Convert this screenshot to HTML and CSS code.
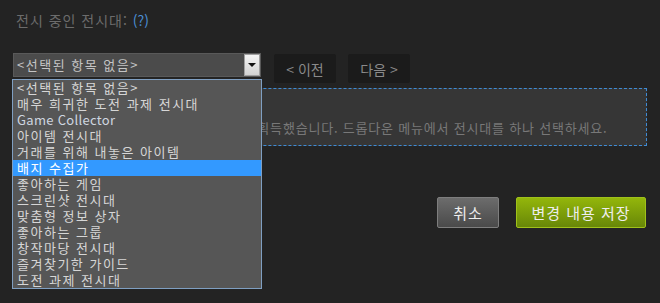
FILE: index.html
```html
<!DOCTYPE html>
<html lang="ko">
<head>
    <meta charset="UTF-8">
    <meta name="viewport" content="width=device-width, initial-scale=1.0">
    <title>전시대 편집</title>
    <link rel="stylesheet" href="styles.css">
</head>
<body>

    <div class="showcase-edit">
        <div class="title">전시 중인 전시대: <a class="help" href="#">(?)</a></div>

        <div class="select-row">
            <div class="select">
                <span class="select-value">&lt;선택된 항목 없음&gt;</span>
                <span class="select-arrow"></span>

                <!-- open dropdown list -->
                <ul class="select-list">
                    <li>&lt;선택된 항목 없음&gt;</li>
                    <li>매우 희귀한 도전 과제 전시대</li>
                    <li class="latin">Game Collector</li>
                    <li>아이템 전시대</li>
                    <li>거래를 위해 내놓은 아이템</li>
                    <li class="active">배지 수집가</li>
                    <li>좋아하는 게임</li>
                    <li>스크린샷 전시대</li>
                    <li>맞춤형 정보 상자</li>
                    <li>좋아하는 그룹</li>
                    <li>창작마당 전시대</li>
                    <li>즐겨찾기한 가이드</li>
                    <li>도전 과제 전시대</li>
                </ul>
            </div>
            <button class="nav-btn">&lt; 이전</button>
            <button class="nav-btn">다음 &gt;</button>
        </div>

        <div class="preview">
            축하합니다! 레벨을 올려서 새 전시대를 획득했습니다. 드롭다운 메뉴에서 전시대를 하나 선택하세요.
        </div>

        <div class="actions">
            <button class="btn-cancel">취소</button>
            <button class="btn-save">변경 내용 저장</button>
        </div>
    </div>

</body>
</html>
```

FILE: styles.css
```css
html {
    height: 100%;
}
body {
    margin: 0;
    min-height: 100%;
    background-color: #232323;
    font-family: "Noto Sans CJK KR", "Noto Sans", sans-serif;
    font-size: 13px;
}
.showcase-edit {
    width: 634px;
    padding: 0 13px;
}
.title {
    padding: 10px 0 0 3px;
    line-height: 20px;
    font-size: 14px;
    letter-spacing: 1px;
    color: #6c6c6c;
}
.help {
    color: #4b8fd6;
    text-decoration: none;
    letter-spacing: 0;
}
.select-row {
    display: flex;
    align-items: flex-start;
    gap: 12px;
    margin-top: 23px;
}
.select {
    position: relative;
    box-sizing: border-box;
    width: 248px;
    height: 24px;
    margin-right: 1px;
    background-color: #4b4b4b;
    border: 1px solid #595959;
    display: flex;
    align-items: center;
    justify-content: space-between;
}
.select-value {
    padding-left: 3px;
    color: #c4c4c4;
    line-height: 16px;
    letter-spacing: 1.5px;
}
.select-arrow {
    box-sizing: border-box;
    width: 16px;
    height: 22px;
    background: linear-gradient(#f4f4f4, #d2d2d2);
    border: 1px solid #a0a0a0;
    display: flex;
    align-items: center;
    justify-content: center;
}
.select-arrow::after {
    content: "";
    border-left: 4px solid transparent;
    border-right: 4px solid transparent;
    border-top: 4px solid #111;
}
.select-list {
    position: absolute;
    top: 25px;
    left: -2px;
    width: 248px;
    margin: 0;
    padding: 0;
    list-style: none;
    background-color: #565656;
    border: 1px solid #7f9fc2;
    z-index: 2;
}
.select-list li {
    height: 16px;
    line-height: 16px;
    padding-left: 4px;
    color: #d6d6d6;
    letter-spacing: 1.5px;
    white-space: nowrap;
}
.select-list li.latin {
    color: #cfd6e0;
    letter-spacing: 0.3px;
}
.select-list li.active {
    background-color: #3399ff;
    color: #fff;
}
.nav-btn {
    width: 62px;
    height: 29px;
    margin-top: 1px;
    padding: 0;
    background-color: #1b1b1b;
    border: none;
    border-radius: 2px;
    color: #8a8a8a;
    font-family: inherit;
    font-size: 14px;
}
.preview {
    box-sizing: border-box;
    height: 58px;
    margin-top: 5px;
    padding: 31px 0 0 12px;
    background-color: #363636;
    border: 1px dashed #3f8bd4;
    line-height: 16px;
    letter-spacing: 0.8px;
    color: #787878;
    white-space: nowrap;
    overflow: hidden;
}
.actions {
    display: flex;
    justify-content: flex-end;
    gap: 17px;
    margin-top: 51px;
    padding-right: 1px;
}
.actions button {
    height: 31px;
    padding: 0;
    border-radius: 2px;
    color: #eeeeee;
    font-family: inherit;
    font-size: 15px;
    letter-spacing: 1px;
}
.btn-cancel {
    width: 62px;
    background: linear-gradient(#6c6c6c, #4a4a4a);
    border: 1px solid #7e7e7e;
}
.btn-save {
    width: 130px;
    background: linear-gradient(#93b60b, #688708);
    border: 1px solid #9fc11a;
}
```
